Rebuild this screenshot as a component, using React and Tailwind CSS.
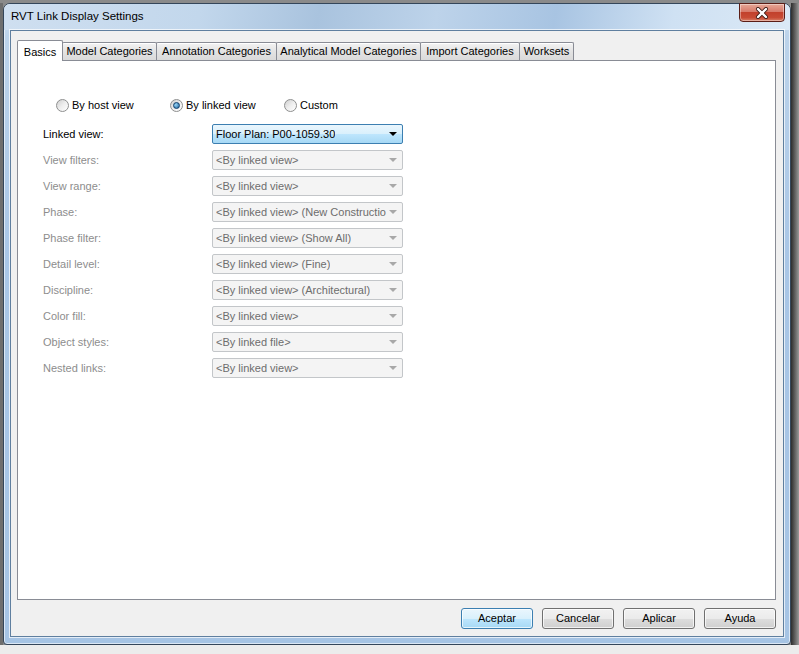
const tabs = [
  { label: "Basics", w: "w-[46px]", selected: true },
  { label: "Model Categories", w: "w-[95px]" },
  { label: "Annotation Categories", w: "w-[121px]" },
  { label: "Analytical Model Categories", w: "w-[145px]" },
  { label: "Import Categories", w: "w-[100px]" },
  { label: "Worksets", w: "w-[55px]" },
];

const rows = [
  ["View filters:", "<By linked view>"],
  ["View range:", "<By linked view>"],
  ["Phase:", "<By linked view> (New Constructio"],
  ["Phase filter:", "<By linked view> (Show All)"],
  ["Detail level:", "<By linked view> (Fine)"],
  ["Discipline:", "<By linked view> (Architectural)"],
  ["Color fill:", "<By linked view>"],
  ["Object styles:", "<By linked file>"],
  ["Nested links:", "<By linked view>"],
];

function Radio({ label, checked }) {
  return (
    <div className="flex items-center w-[114px]">
      <div className="w-[13px] h-[13px] rounded-full border border-[#8e8f8f] bg-gradient-to-br from-[#cfcfcf] via-[#eeeeee] to-[#ffffff] flex items-center justify-center">
        {checked && (
          <div className="w-[7px] h-[7px] rounded-full border border-[#0f3f6c] bg-[radial-gradient(circle_at_35%_35%,#9ad8f8,#1a5d98)]" />
        )}
      </div>
      <span className="ml-[3px]">{label}</span>
    </div>
  );
}

function Combo({ value, active }) {
  return (
    <div
      className={
        active
          ? "w-[191px] h-[20px] flex items-center justify-between rounded-[2px] border border-[#3c7fb1] bg-[linear-gradient(to_bottom,#eaf6fd_0%,#d9f0fc_50%,#bee6fd_51%,#a7d9f5_100%)] pl-[3px] pr-[5px] text-black"
          : "w-[191px] h-[20px] flex items-center justify-between rounded-[2px] border border-[#c3c6c9] bg-[#f4f4f4] pl-[3px] pr-[5px] text-[#6d6d6d]"
      }
    >
      <span className="whitespace-nowrap overflow-hidden">{value}</span>
      <div
        className={
          active
            ? "w-0 h-0 border-l-[4px] border-r-[4px] border-t-[4px] border-l-transparent border-r-transparent border-t-black shrink-0"
            : "w-0 h-0 border-l-[4px] border-r-[4px] border-t-[4px] border-l-transparent border-r-transparent border-t-[#a8a8a8] shrink-0"
        }
      />
    </div>
  );
}

function Button({ label, primary }) {
  return (
    <div
      className={
        primary
          ? "w-[72px] h-[21px] flex items-center justify-center rounded-[3px] border border-[#3c7fb1] bg-[linear-gradient(to_bottom,#eaf6fd_0%,#d9f0fc_50%,#bee6fd_51%,#a7d9f5_100%)] shadow-[inset_0_0_0_1px_rgba(255,255,255,0.7)]"
          : "w-[72px] h-[21px] flex items-center justify-center rounded-[3px] border border-[#707070] bg-[linear-gradient(to_bottom,#f2f2f2_0%,#ebebeb_50%,#dddddd_51%,#cfcfcf_100%)] shadow-[inset_0_0_0_1px_rgba(255,255,255,0.7)]"
      }
    >
      {label}
    </div>
  );
}

export default function App() {
  return (
    <div
      className="w-[799px] h-[654px] flex flex-col bg-[#8a8a8a] overflow-hidden text-[11px] text-black"
      style={{ fontFamily: '"Liberation Sans", Arial, sans-serif' }}
    >
      <div className="flex mt-[3px]">
        <div className="w-[3px] bg-[#6e6e6e]" />
        {/* window */}
        <div className="relative w-[788px] h-[642px] flex flex-col rounded-t-[7px] rounded-b-[4px] border border-[#34465a] bg-[linear-gradient(to_bottom,#d3e3f3_0%,#bcd3ea_5%,#a9c6e6_40%,#a6c4e4_100%)] shadow-[inset_0_0_0_1px_rgba(255,255,255,0.6)]">
          {/* title bar */}
          <div className="h-[26px] flex items-center pl-[7px] rounded-t-[6px] bg-[linear-gradient(100deg,#cfdff0_0%,#c2d7ec_25%,#a9c3de_40%,#bdd3ea_55%,#a8c4e2_70%,#cfe1f3_85%,#dbe9f6_100%)]">
            <span className="text-[11.5px] text-black">RVT Link Display Settings</span>
          </div>
          <div className="absolute top-[-1px] right-[5px] w-[46px] h-[19px] rounded-b-[4px] border border-[#5b1e17] bg-[linear-gradient(to_bottom,#e6a897_0%,#d77a6a_45%,#c2412c_50%,#c84b34_80%,#d9826a_100%)] shadow-[inset_0_0_0_1px_rgba(255,255,255,0.4)] flex items-center justify-center">
            <svg width="14" height="12" viewBox="0 0 14 12">
              <path
                d="M3 2 L11 10 M11 2 L3 10"
                stroke="#3a1a14"
                strokeWidth="4"
                strokeLinecap="round"
              />
              <path
                d="M3 2 L11 10 M11 2 L3 10"
                stroke="#ffffff"
                strokeWidth="2.4"
                strokeLinecap="round"
              />
            </svg>
          </div>
          {/* client */}
          <div className="flex-1 mx-[6px] mb-[7px] flex flex-col bg-[#f0f0f0] border border-[#5f7f9f] shadow-[0_0_0_1px_rgba(255,255,255,0.7)] pt-[9px] pl-[6px] pr-[7px]">
            {/* tabs */}
            <div className="h-[20px] flex items-end relative z-10">
              {tabs.map((t) =>
                t.selected ? (
                  <div
                    key={t.label}
                    className={`${t.w} h-[21px] -mb-px flex items-start justify-center pt-[3px] bg-white border border-b-0 border-[#898c95] rounded-t-[2px]`}
                  >
                    {t.label}
                  </div>
                ) : (
                  <div
                    key={t.label}
                    className={`${t.w} h-[18px] -ml-px flex items-center justify-center bg-[linear-gradient(to_bottom,#f3f3f3,#e3e3e3_50%,#dadada)] border border-b-0 border-[#898c95] rounded-t-[2px] shadow-[inset_0_1px_0_#ffffff] whitespace-nowrap`}
                  >
                    {t.label}
                  </div>
                )
              )}
            </div>
            {/* panel */}
            <div className="h-[540px] bg-white border border-[#898c95] flex flex-col pt-[36px]">
              <div className="flex items-center h-[16px] pl-[38px]">
                <Radio label="By host view" />
                <Radio label="By linked view" checked />
                <Radio label="Custom" />
              </div>
              <div className="flex flex-col gap-[6px] mt-[11px] pl-[25px]">
                <div className="flex items-center">
                  <span className="w-[169px]">Linked view:</span>
                  <Combo value="Floor Plan: P00-1059.30" active />
                </div>
                {rows.map(([label, value]) => (
                  <div key={label} className="flex items-center">
                    <span className="w-[169px] text-[#8d8d8d]">{label}</span>
                    <Combo value={value} />
                  </div>
                ))}
              </div>
            </div>
            {/* buttons */}
            <div className="flex justify-end gap-[9px] mt-[8px]">
              <Button label="Aceptar" primary />
              <Button label="Cancelar" />
              <Button label="Aplicar" />
              <Button label="Ayuda" />
            </div>
          </div>
        </div>
        <div className="flex-1 bg-gradient-to-r from-[#2e2e2e] to-[#9a9a9a]" />
      </div>
      <div className="flex-1 bg-[#ececec]" />
    </div>
  );
}
